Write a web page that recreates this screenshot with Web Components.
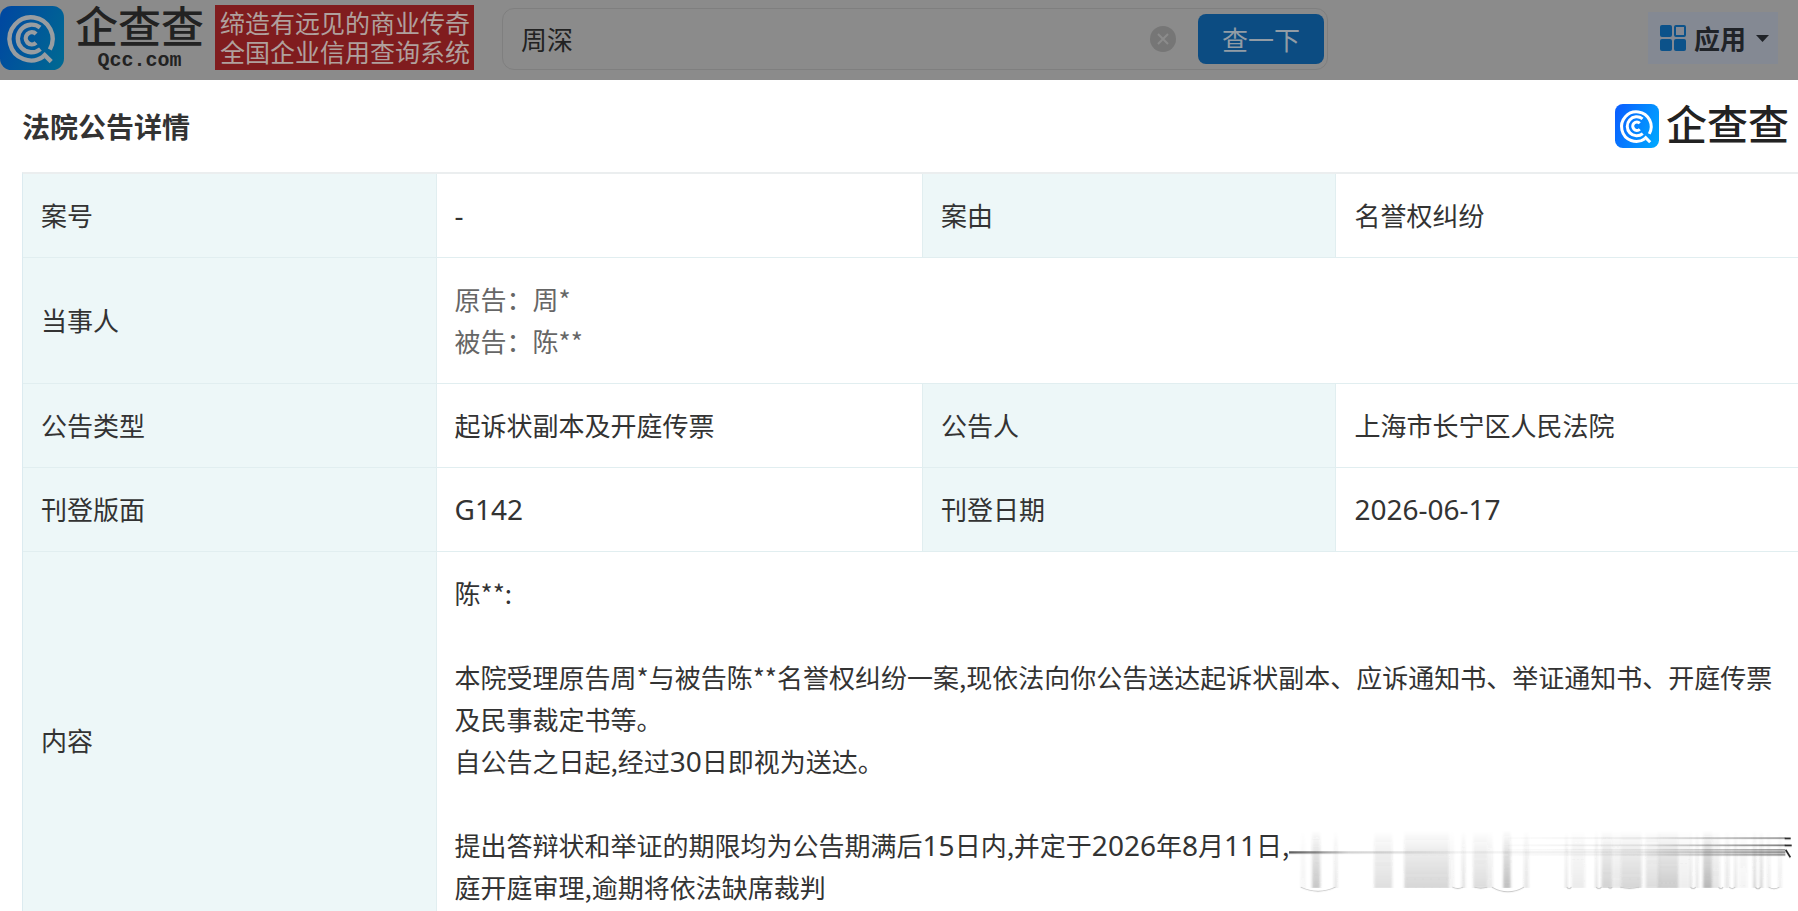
<!DOCTYPE html>
<html lang="zh-CN">
<head>
<meta charset="utf-8">
<title>法院公告详情</title>
<style>
  body {
    margin: 0;
    height: 100vh;
    overflow: hidden;
    background: #fff;
    color: #333;
    font-family: "Noto Sans CJK SC", sans-serif;
    font-size: 26px;
    line-height: 42px;
  }
</style>
</head>
<body>
<notice-page></notice-page>

<script>
// Brand mark with the wordmark next to it, the slot holds the domain line
class BrandLogo extends HTMLElement {
  constructor() {
    super();
    this.attachShadow({ mode: 'open' });
  }

  connectedCallback() {
    this.shadowRoot.innerHTML = `
      <style>
        :host {
          display: flex;
          align-items: center;
          gap: var(--logo-gap, 7px);
          color: #222;
          flex: none;
        }
        svg {
          width: var(--logo-icon, 44px);
          height: var(--logo-icon, 44px);
        }
        .words {
          display: flex;
          flex-direction: column;
          align-items: center;
        }
        .name {
          font-family: "Liberation Sans", "Noto Sans CJK SC", sans-serif;
          font-size: var(--logo-size, 41px);
          line-height: 46px;
          font-weight: 500;
        }
      </style>
      <svg viewBox="0 0 190 190" aria-hidden="true">
        <defs>
          <linearGradient id="tile" x1="0" y1="0.3" x2="1" y2="0.7">
            <stop offset="0" stop-color="var(--logo-from, #0a62ff)"/>
            <stop offset="1" stop-color="var(--logo-to, #00a4ff)"/>
          </linearGradient>
        </defs>
        <rect width="190" height="190" rx="34" fill="url(#tile)"/>
        <g fill="none" stroke="var(--logo-line, #fff)" stroke-width="13">
          <path d="M129 150A64 64 0 1 1 148 129"/>
          <path d="M119 64A41 41 0 1 0 120 128"/>
          <path d="M107 83A18 18 0 1 0 107 109"/>
          <path d="M128 141L152 165"/>
        </g>
      </svg>
      <div class="words">
        <span class="name">企查查</span>
        <slot></slot>
      </div>
    `;
  }
}

class SearchBox extends HTMLElement {
  constructor() {
    super();
    this.attachShadow({ mode: 'open' });
  }

  connectedCallback() {
    this.render();
    this.setupEventListeners();
  }

  render() {
    this.shadowRoot.innerHTML = `
      <style>
        :host {
          display: block;
        }
        form {
          display: flex;
          align-items: center;
          box-sizing: border-box;
          height: 62px;
          padding: 0 3px 0 18px;
          border: 1px solid #7f7f7f;
          border-radius: 12px;
        }
        input {
          flex: 1;
          min-width: 0;
          padding: 0;
          border: 0;
          outline: 0;
          background: none;
          color: #222;
          font: inherit;
        }
        .clear {
          display: flex;
          margin-right: 22px;
          padding: 0;
          border: 0;
          background: none;
        }
        .submit {
          width: 126px;
          height: 50px;
          padding: 0;
          border: 0;
          border-radius: 8px;
          background: #0c4c82;
          color: #929ca5;
          font: inherit;
        }
      </style>
      <form>
        <input type="text" aria-label="搜索" value="${this.getAttribute('value') || ''}">
        <button class="clear" type="button" aria-label="清除">
          <svg width="26" height="26" viewBox="0 0 26 26">
            <circle cx="13" cy="13" r="13" fill="#767676"/>
            <path d="M8 8L18 18M18 8L8 18" stroke="#8b8b8b" stroke-width="2"/>
          </svg>
        </button>
        <button class="submit" type="submit">查一下</button>
      </form>
    `;
  }

  setupEventListeners() {
    const input = this.shadowRoot.querySelector('input');
    this.shadowRoot.querySelector('.clear').addEventListener('click', () => {
      input.value = '';
    });
    this.shadowRoot.querySelector('form').addEventListener('submit', (e) => {
      e.preventDefault();
    });
  }
}

class SiteHeader extends HTMLElement {
  constructor() {
    super();
    this.attachShadow({ mode: 'open' });
  }

  connectedCallback() {
    this.shadowRoot.innerHTML = `
      <style>
        :host {
          display: flex;
          align-items: flex-start;
          box-sizing: border-box;
          height: 80px;
          padding-right: 20px;
          background: #8b8b8b;
        }
        brand-logo {
          --logo-icon: 64px;
          --logo-size: 43px;
          --logo-gap: 11px;
          --logo-from: #0049a0;
          --logo-to: #006793;
          --logo-line: #989da1;
          margin-top: 5px;
        }
        .domain {
          font: bold 20px/20px "Liberation Mono", monospace;
        }
        .slogan {
          flex: none;
          box-sizing: border-box;
          height: 65px;
          margin: 5px 28px 0 11px;
          padding: 5px 4px 0 5px;
          background: #801c1e;
          color: #b0a09d;
          font-family: "Liberation Sans", "Noto Sans CJK SC", sans-serif;
          font-size: 25px;
          line-height: 29px;
        }
        search-box {
          flex: 0 1 826px;
          margin-top: 8px;
        }
        .apps {
          display: flex;
          align-items: center;
          flex: none;
          height: 52px;
          margin: 12px 0 0 auto;
          padding: 0 9px 0 12px;
          border: 0;
          background: #848993;
          color: #202328;
          font: inherit;
          font-weight: bold;
        }
        .caret {
          margin-left: 10px;
        }
        .grid {
          margin-right: 7px;
        }
      </style>
      <brand-logo><span class="domain">Qcc.com</span></brand-logo>
      <div class="slogan">缔造有远见的商业传奇<br>全国企业信用查询系统</div>
      <search-box value="周深"></search-box>
      <button class="apps" type="button">
        <svg class="grid" width="27" height="27" viewBox="0 0 27 27" fill="#0c528a">
          <rect x="0" y="0" width="12" height="12" rx="2"/>
          <rect x="15" y="1" width="10" height="10" rx="1" fill="none" stroke="#0c528a" stroke-width="2"/>
          <rect x="0" y="14" width="12" height="12" rx="2"/>
          <rect x="14" y="14" width="12" height="12" rx="2"/>
        </svg>
        应用
        <svg class="caret" width="13" height="7" viewBox="0 0 13 7"><path d="M0 0H13L6.500 7Z" fill="#202328"/></svg>
      </button>
    `;
  }
}

// Vertical smear that covers the courtroom details
class SmearMask extends HTMLElement {
  constructor() {
    super();
    this.attachShadow({ mode: 'open' });
  }

  connectedCallback() {
    // x, width, opacity at the bottom
    const bars = [
      [80, 14, 0.05], [114, 24, 0.3], [180, 10, 0.14],
      [300, 54, 0.17], [390, 134, 0.22], [528, 10, 0.08], [562, 10, 0.16],
      [596, 44, 0.18], [642, 12, 0.12], [686, 22, 0.34], [748, 14, 0.14],
      [872, 6, 0.18], [890, 40, 0.1], [962, 6, 0.2], [980, 32, 0.24],
      [1014, 24, 0.12], [1038, 62, 0.22], [1112, 40, 0.18], [1150, 60, 0.27],
      [1212, 30, 0.09], [1244, 6, 0.2], [1262, 8, 0.16], [1284, 26, 0.38],
      [1310, 24, 0.14], [1350, 12, 0.14], [1378, 6, 0.2], [1392, 24, 0.06],
      [1434, 8, 0.25], [1454, 8, 0.25], [1476, 8, 0.12], [1510, 8, 0.12]
    ];
    const bows = [[80, 184, 12], [534, 566, 4], [600, 638, 3], [652, 748, 14], [876, 890, 4],
      [964, 980, 4], [1000, 1012, 3], [1036, 1092, 4], [1246, 1262, 4], [1330, 1344, 4],
      [1362, 1380, 4], [1440, 1456, 5], [1480, 1512, 5]];
    this.shadowRoot.innerHTML = `
      <style>
        :host {
          display: block;
          height: 42px;
        }
        svg {
          display: block;
          width: 100%;
          height: 75px;
        }
      </style>
      <svg viewBox="45 77 1507 223" preserveAspectRatio="none" aria-hidden="true">
        <defs>
          <linearGradient id="fade" x1="0" y1="0" x2="0" y2="1">
            <stop offset="0" stop-color="#444" stop-opacity="0"/>
            <stop offset="0.4" stop-color="#444" stop-opacity="0.5"/>
            <stop offset="1" stop-color="#444"/>
          </linearGradient>
          <linearGradient id="out" gradientUnits="userSpaceOnUse" x1="45" y1="0" x2="1530" y2="0">
            <stop offset="0" stop-color="#222" stop-opacity="0.75"/>
            <stop offset="0.12" stop-color="#222" stop-opacity="0.2"/>
            <stop offset="0.35" stop-color="#222" stop-opacity="0.05"/>
            <stop offset="0.7" stop-color="#222" stop-opacity="0.08"/>
            <stop offset="1" stop-color="#222" stop-opacity="0.5"/>
          </linearGradient>
          <linearGradient id="in" gradientUnits="userSpaceOnUse" x1="700" y1="0" x2="1530" y2="0">
            <stop offset="0" stop-color="#222" stop-opacity="0.02"/>
            <stop offset="0.5" stop-color="#222" stop-opacity="0.1"/>
            <stop offset="1" stop-color="#222" stop-opacity="0.6"/>
          </linearGradient>
          <filter id="soft" x="-5%" y="-5%" width="110%" height="110%">
            <feGaussianBlur stdDeviation="3 0"/>
          </filter>
        </defs>
        <g fill="url(#fade)" filter="url(#soft)">
          ${bars.map(([x, w, o]) => `<rect x="${x}" y="95" width="${w}" height="172" opacity="${o}"/>`).join('')}
        </g>
        <g fill="none" stroke="#c4c4c4" stroke-width="3">
          ${bows.map(([a, b, d]) => `<path d="M${a} 265Q${(a + b) / 2} ${265 + 2 * d} ${b} 265"/>`).join('')}
        </g>
        <rect x="45" y="158" width="1485" height="7" fill="url(#out)"/>
        <g fill="url(#in)">
          <rect x="700" y="117" width="830" height="4"/>
          <rect x="700" y="138" width="830" height="5"/>
          <rect x="700" y="152" width="830" height="4"/>
          <rect x="700" y="167" width="830" height="4"/>
        </g>
        <path d="M1528 120H1546M1528 141H1549M1531 154L1545 176" fill="none" stroke="#222" stroke-width="5"/>
      </svg>
    `;
  }
}

class NoticeTable extends HTMLElement {
  constructor() {
    super();
    this.attachShadow({ mode: 'open' });
  }

  connectedCallback() {
    this.shadowRoot.innerHTML = `
      <style>
        :host {
          display: block;
          margin-left: 22px;
        }
        table {
          width: 100%;
          table-layout: fixed;
          border-collapse: separate;
          border-spacing: 0;
          border-top: 2px solid #ebeeef;
          border-left: 1px solid #dcebf0;
        }
        .label {
          width: 23.3%;
        }
        .value {
          width: 27.4%;
        }
        th, td {
          padding: 20px 5px 21px 18px;
          border-bottom: 1px solid #e1eef0;
          border-right: 1px solid #e1eef0;
          text-align: left;
          vertical-align: middle;
          font-weight: 400;
        }
        tr > :last-child {
          border-right: 0;
        }
        th {
          background: #edf7f8;
        }
        .party {
          color: #666;
        }
        .num {
          font: 28px/42px "Noto Sans", sans-serif;
        }
        span.num {
          line-height: 28px;
        }
        p {
          margin: 0 0 42px;
        }
        p:last-child {
          margin: 0;
        }
        .masked {
          display: flex;
        }
        .masked > span {
          flex: none;
        }
        smear-mask {
          flex: 1;
        }
      </style>
      <table>
        <colgroup>
          <col class="label"><col class="value"><col class="label"><col>
        </colgroup>
        <tr>
          <th scope="row">案号</th><td class="num">-</td>
          <th scope="row">案由</th><td>名誉权纠纷</td>
        </tr>
        <tr>
          <th scope="row">当事人</th>
          <td class="party" colspan="3">原告：周*<br>被告：陈**</td>
        </tr>
        <tr>
          <th scope="row">公告类型</th><td>起诉状副本及开庭传票</td>
          <th scope="row">公告人</th><td>上海市长宁区人民法院</td>
        </tr>
        <tr>
          <th scope="row">刊登版面</th><td class="num">G142</td>
          <th scope="row">刊登日期</th><td class="num">2026-06-17</td>
        </tr>
        <tr>
          <th scope="row">内容</th>
          <td colspan="3">
            <p>陈**:</p>
            <p>本院受理原告周*与被告陈**名誉权纠纷一案,现依法向你公告送达起诉状副本、应诉通知书、举证通知书、开庭传票<br>及民事裁定书等。<br>自公告之日起,经过<span class="num">30</span>日即视为送达。</p>
            <p>
              <span class="masked"><span>提出答辩状和举证的期限均为公告期满后<span class="num">15</span>日内,并定于<span class="num">2026</span>年<span class="num">8</span>月<span class="num">11</span>日,</span><smear-mask></smear-mask></span>
              庭开庭审理,逾期将依法缺席裁判
            </p>
          </td>
        </tr>
      </table>
    `;
  }
}

class NoticePage extends HTMLElement {
  constructor() {
    super();
    this.attachShadow({ mode: 'open' });
  }

  connectedCallback() {
    this.shadowRoot.innerHTML = `
      <style>
        :host {
          display: block;
        }
        .title {
          display: flex;
          align-items: center;
          justify-content: space-between;
          height: 92px;
          padding: 0 9px 0 22px;
        }
        h1 {
          margin: 0;
          font-size: 28px;
          font-weight: bold;
        }
      </style>
      <site-header></site-header>
      <main>
        <div class="title">
          <h1>法院公告详情</h1>
          <brand-logo></brand-logo>
        </div>
        <notice-table></notice-table>
      </main>
    `;
  }
}

customElements.define('brand-logo', BrandLogo);
customElements.define('search-box', SearchBox);
customElements.define('site-header', SiteHeader);
customElements.define('smear-mask', SmearMask);
customElements.define('notice-table', NoticeTable);
customElements.define('notice-page', NoticePage);
</script>
</body>
</html>
